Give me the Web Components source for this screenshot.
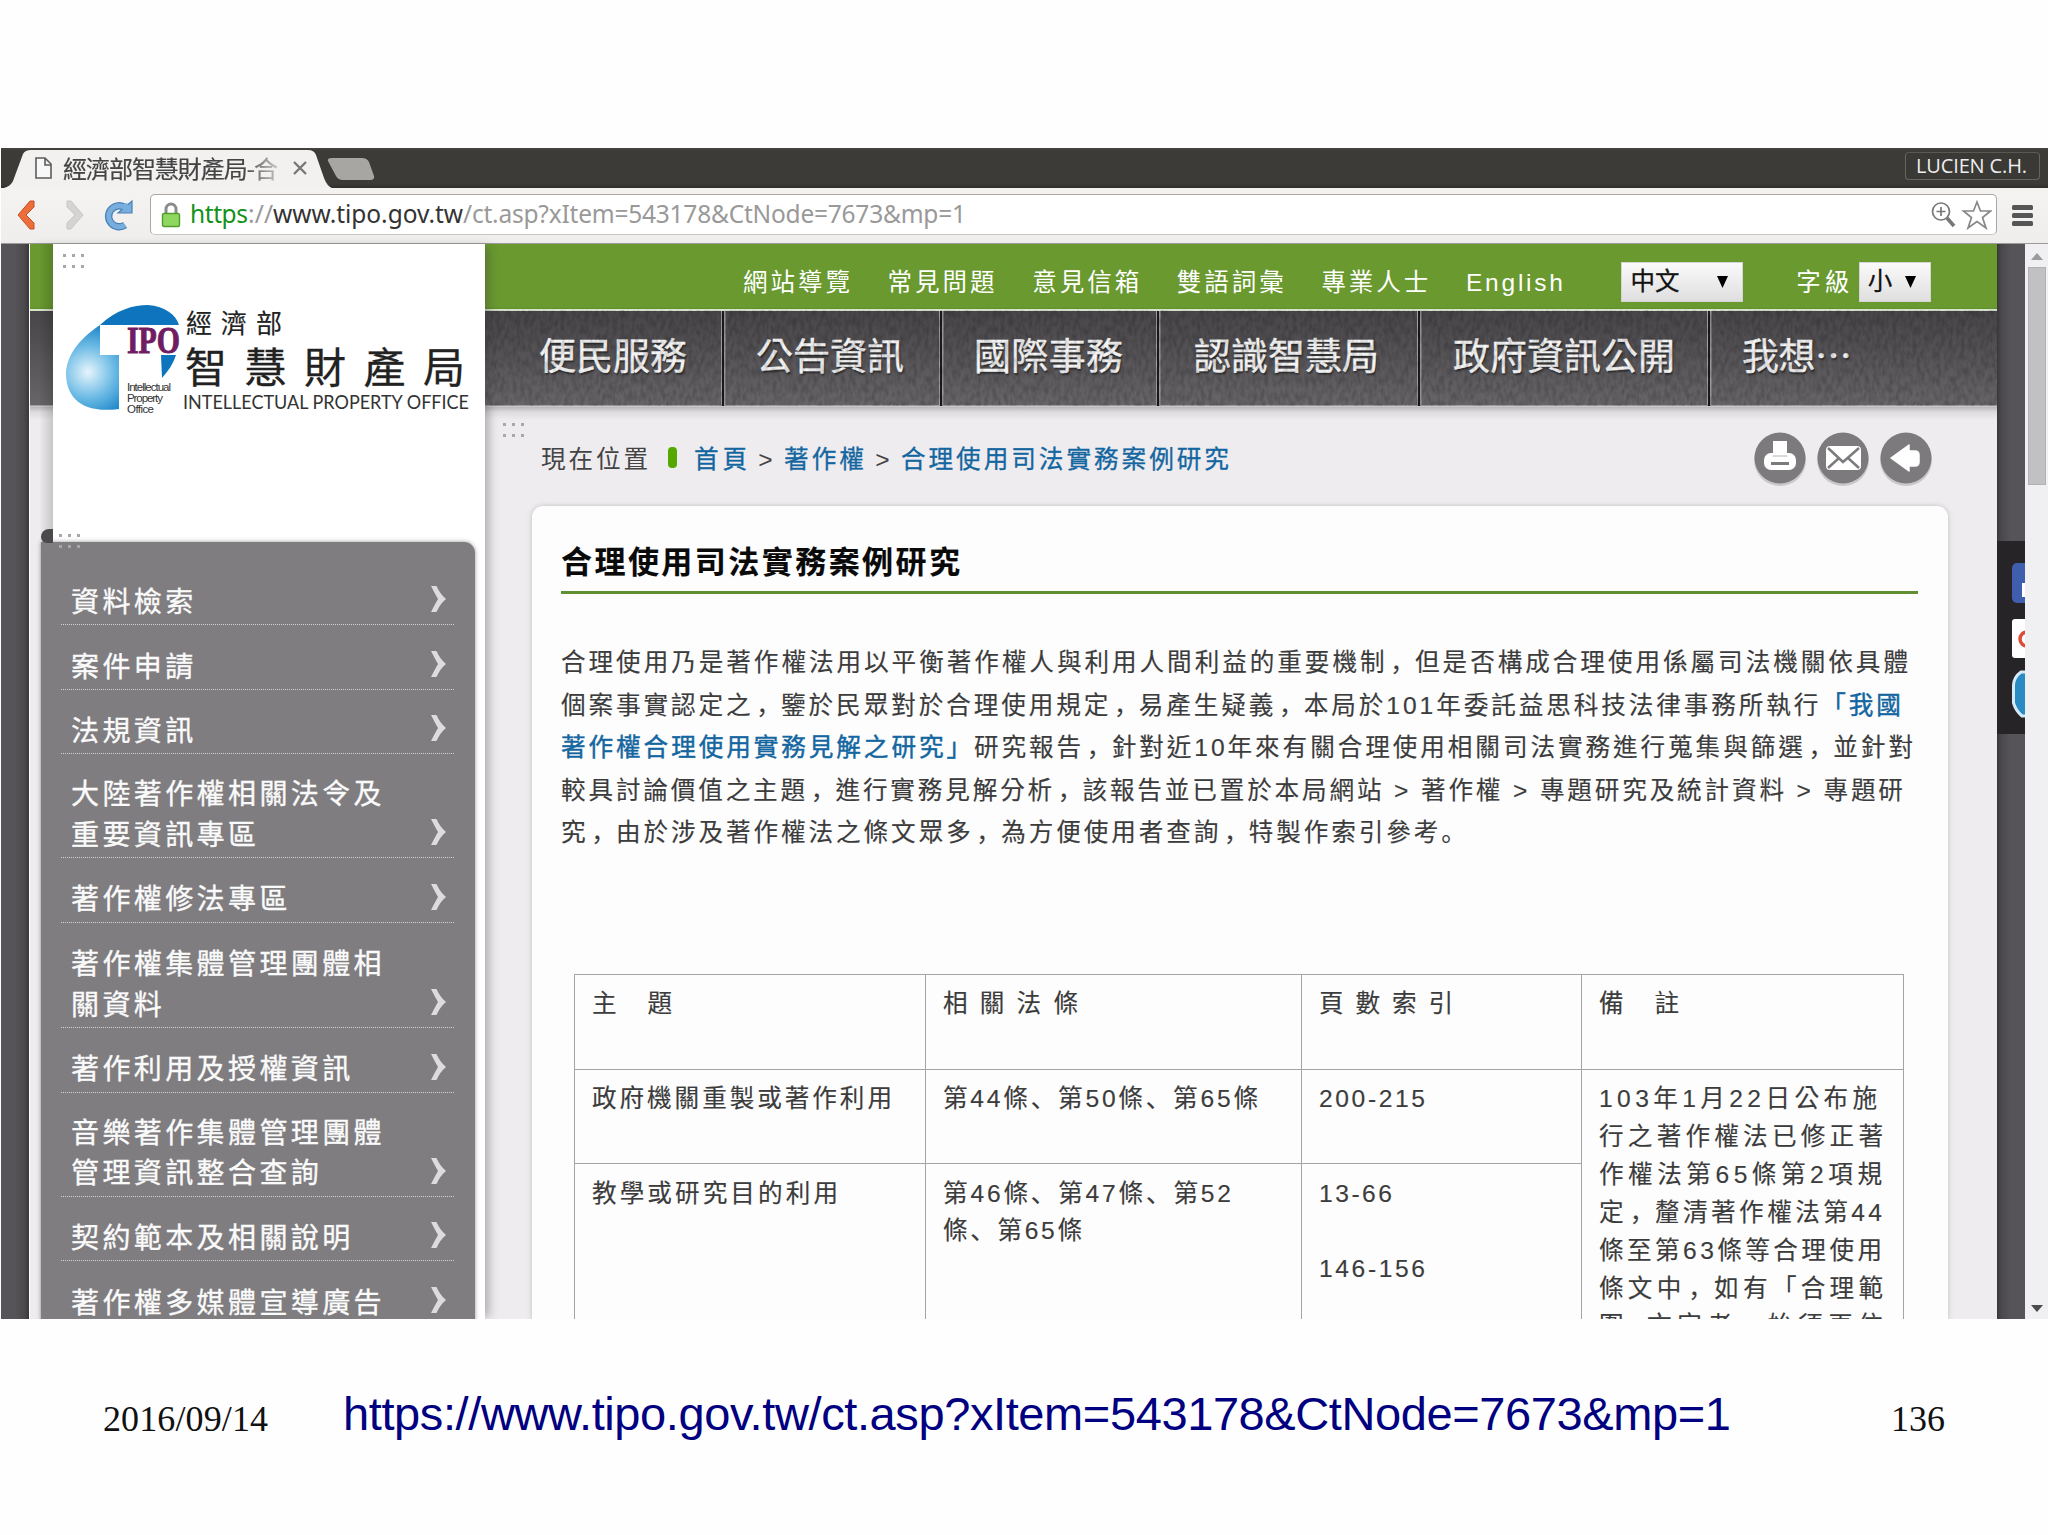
<!DOCTYPE html>
<html lang="zh-Hant">
<head>
<meta charset="utf-8">
<title>經濟部智慧財產局</title>
<style>
html,body{margin:0;background:#fefefe}
body{width:2048px;height:1535px;overflow:hidden;font-family:"Liberation Sans","Noto Sans CJK TC",sans-serif}
</style>
</head>
<body>
<slide-page></slide-page>
<script>
/* Ideographic commas and stops take the lower-left glyph forms; the full-width comma is nudged toward the centre of its cell. */
const punct=s=>s.replace(/[、。]/g,'<span class="j" lang="ja">$&</span>').replace(/，/g,'<span class="j c" lang="ja">，</span>');
const make=(name,html)=>customElements.define(name,class extends HTMLElement{
  constructor(){super();this.attachShadow({mode:'open'}).innerHTML=typeof html==='function'?'':html}
  connectedCallback(){if(typeof html==='function')this.shadowRoot.innerHTML=html(this)}
});
const base='*,:host{box-sizing:border-box}.j{font-family:"Noto Sans CJK JP";line-height:0}.c{padding-left:.11em;margin-right:-.11em}';

make('slide-page',`<style>${base}
:host{display:flex;flex-direction:column;width:2048px;height:1535px;padding:148px 0 0 1px}
browser-window{flex:none}
slide-footer{flex:1}
</style><browser-window></browser-window><slide-footer></slide-footer>`);

make('slide-footer',`<style>${base}
:host{display:flex;padding:72px 0 0 102px;align-items:flex-start}
.d{font:36px/40px "Liberation Serif",serif;margin-top:8px;color:#111}
.u{font-size:47px;line-height:54px;color:#000080;margin-left:75px;margin-top:-4px}
.n{margin-left:160px}
</style>
<fit-text class="d" w="165">2016/09/14</fit-text>
<fit-text class="u" w="1388">https://www.tipo.gov.tw/ct.asp?xItem=543178&amp;CtNode=7673&amp;mp=1</fit-text>
<fit-text class="d n" w="54">136</fit-text>`);

make('browser-window',`<style>${base}
:host{display:flex;flex-direction:column;width:2047px;height:1171px;overflow:hidden}
.view{display:flex;flex:1;min-height:0;background:#565458}
.l,.r{width:28px;flex:none}
.l{background:linear-gradient(90deg,#565458 50%,#4a484b 85%,#39373a)}
.r{background:linear-gradient(270deg,#565458 50%,#4a484b 85%,#39373a);display:flex;flex-direction:column;padding-top:297px}
site-page{width:1968px;flex:none}
</style>
<tab-strip></tab-strip><tool-bar></tool-bar>
<div class="view"><div class="l"></div><site-page></site-page><div class="r"><share-dock></share-dock></div><scroll-bar></scroll-bar></div>`);

make('tab-strip',`<style>${base}
:host{display:flex;height:39.5px;flex:none;background:linear-gradient(#45443f 0,#3c3b37 3px,#3c3b37 36px,#2f2e2b);justify-content:space-between}
.tabs{display:grid}
.tabs>*{grid-area:1/1}
.row{display:flex;align-items:center;padding-left:34px;height:40px}
.t{font-family:"Noto Sans CJK TC",sans-serif;font-size:24px;line-height:36px;color:#444;-webkit-text-stroke:.2px #444;margin-left:10px;-webkit-mask-image:linear-gradient(90deg,#000 84%,rgba(0,0,0,.25));mask-image:linear-gradient(90deg,#000 84%,rgba(0,0,0,.25))}
.x{margin-left:15px}
.who{width:135px;height:28px;margin:4px 8px 0 0;border:1px solid #66655f;border-top-color:#5a5954;border-radius:4px;color:#eee;font:20px/26px "Open Sans",sans-serif;padding-left:10px;background:#3a3935}
</style>
<div class="tabs">
<svg width="380" height="40" viewBox="0 0 380 40"><path d="M0 40H3Q10 38 12 33L22 6Q24 2 30 2H307Q313 2 315 7L323 30Q326 38 331 40Z" fill="#f2f1f0"/><path d="M331 10H361Q366 10 368 14L373 28Q374 32 369 32H342Q337 32 335 28L327 13Q326 10 331 10Z" fill="#a7a6a3"/></svg>
<div class="row"><svg width="18" height="22" viewBox="0 0 18 22"><path d="M1 1H10L16 7V21H1ZM10 1V8H16" fill="#f8f8f8" stroke="#5c5c5c" stroke-width="1.6"/></svg>
<fit-text class="t" w="215">經濟部智慧財產局-合</fit-text>
<svg class="x" width="14" height="14" viewBox="0 0 14 14"><path d="M1 1L13 13M13 1L1 13" stroke="#777" stroke-width="2.4"/></svg></div>
</div>
<div class="who"><fit-text w="111">LUCIEN C.H.</fit-text></div>`);

make('tool-bar',`<style>${base}
:host{display:flex;height:56.5px;flex:none;background:linear-gradient(#f4f3f2,#efeeed);border-bottom:1.5px solid #9c9a98;padding:6.5px 8px 8px 16px;align-items:stretch}
.nav{width:133px;flex:none}
.box{display:flex;align-items:center;width:1847px;border:1.5px solid #a9a6a3;border-bottom-color:#c9c7c4;border-radius:5px;background:#fff;padding:0 4px 0 10px}
.url{display:flex;font:24.5px/36px "Noto Sans",sans-serif;color:#999;margin-left:9px;flex:1;margin-top:-1px}
.g{color:#13911b}.b{color:#333}
.menu{margin:11px 0 0 15px}
</style>
<svg class="nav" width="133" height="42" viewBox="0 0 133 42">
<path d="M13 7L1 21L13 35H17V29L9 21L17 13V7Z" fill="#ec6f3b" stroke="#c44f22" stroke-width="1"/>
<path d="M54 7L66 21L54 35H50V29L58 21L50 13V7Z" fill="#d6d4d3" stroke="#c8c6c4" stroke-width="1"/>
<path d="M108 31A10.500 10.500 0 1 1 107 13" fill="none" stroke="#4781b5" stroke-width="7.400"/><path d="M101 19H115V7Z" fill="#78aede" stroke="#4781b5" stroke-width="1.200"/>
<path d="M108 31A10.500 10.500 0 1 1 107 13L111 11" fill="none" stroke="#78aede" stroke-width="5"/></svg>
<div class="box">
<svg width="20" height="26" viewBox="0 0 20 26"><path d="M5 12V7a5 5 0 0 1 10 0V12" fill="none" stroke="#8b8b8b" stroke-width="3"/><rect x="1.500" y="11.500" width="17" height="13" rx="1.500" fill="#8fd75f" stroke="#4f9f2c" stroke-width="1.400"/></svg>
<div class="url"><fit-text class="g" w="58">https</fit-text><fit-text w="25">://</fit-text><fit-text class="b" w="190">www.tipo.gov.tw</fit-text><fit-text w="503">/ct.asp?xItem=543178&amp;CtNode=7673&amp;mp=1</fit-text></div>
<svg width="62" height="30" viewBox="0 0 62 30" fill="none" stroke="#777" stroke-width="1.700"><circle cx="11" cy="11.500" r="8.500"/><path d="M11 7V16M6.500 11.500H15.500"/><path d="M17 18L24 26" stroke-width="3.600"/><path d="M47 2L50.500 11H60.500L52.500 17.500L56 28L47 21.500L38 28L41.500 17.500L33.500 11H43.500Z" stroke="#888"/></svg>
</div>
<svg class="menu" width="22" height="22" viewBox="0 0 22 22" fill="#555"><rect width="21" height="5" rx="1.500"/><rect y="8" width="21" height="5" rx="1.500"/><rect y="16" width="21" height="5" rx="1.500"/></svg>`);

make('scroll-bar',`<style>${base}
:host{display:flex;flex-direction:column;align-items:center;width:23px;background:#f0eff1;padding:9px 0 7px}
.th{width:18px;height:218px;background:#c1c0c2;border:1px solid #b2b1b3;margin-top:7px}
.sp{flex:1}
</style><svg width="12" height="7" viewBox="0 0 12 7"><path d="M6 0L12 7H0Z" fill="#9b9a9c"/></svg><div class="th"></div><div class="sp"></div><svg width="12" height="7" viewBox="0 0 12 7"><path d="M6 7L12 0H0Z" fill="#4c4c4c"/></svg>`);

make('share-dock',`<style>${base}
:host{display:flex;height:193px;background:#262427;padding:22px 0 0 15px;overflow:hidden}
</style><svg width="13" height="160" viewBox="0 0 13 160">
<rect x="0" y="0" width="40" height="40" rx="5" fill="#3f5fae"/><path d="M10 20H13V34H10Z" fill="#fff"/>
<rect x="0" y="56" width="40" height="39" rx="3" fill="#fff"/><circle cx="15" cy="76" r="7" fill="none" stroke="#dd4b39" stroke-width="3.500"/>
<path d="M13 109H9Q2 114 1.500 122V140Q4 148 10 153H13" fill="#2a8ac4" stroke="#d5eaf6" stroke-width="3"/></svg>`);

make('site-page',`<style>${base}
:host{display:flex;height:1076px;border-left:1px solid #fff;
background:linear-gradient(#69992f 0 63px,#5f8f2c 65px,#d9e4cf 65px 67px,transparent 67px),linear-gradient(transparent 67px,#484648 67px,#504e51 95px,#676568 161px,#d9d7da 162px,#b9b6ba 163px,#dddbde 168px,#eeecef 176px)}
side-column{width:455px;flex:none}
.main{flex:1;min-width:0;display:flex;flex-direction:column}
</style><side-column></side-column><div class="main"><top-links></top-links><main-nav></main-nav><crumb-bar></crumb-bar><article-card></article-card></div>`);

make('dot-mark',`<style>:host{display:block;width:24px;height:14px}svg{display:block}</style>
<svg width="24" height="14" viewBox="0 0 24 14" fill="#a9a7aa"><path d="M0 0h3v3h-3zM9 0h3v3h-3zM18 0h3v3h-3zM0 11h3v3h-3zM9 11h3v3h-3zM18 11h3v3h-3z"/></svg>`);

make('side-column',`<style>${base}
:host{display:flex;flex-direction:column;background:linear-gradient(90deg,transparent 0 9px,rgba(0,0,0,.16) 23px,#fff 23px);position:relative;box-shadow:7px 0 9px -3px rgba(60,55,60,.35);z-index:1}
.logo{height:298px;margin-left:23px;flex:none;padding:10px 0 0 10px;display:flex;flex-direction:column}
.logo svg{margin-top:33px;margin-left:2px}
.menu{width:434px;margin-left:11px;flex:1;background:#7f7d80;border-radius:0 11px 0 0;padding:27px 21px 0 20px;display:flex;flex-direction:column;box-shadow:0 0 4px rgba(80,80,80,.6)}
.fold{position:absolute;left:11px;top:285px;width:12px;height:14px;background:#4b494c;border-radius:8px 0 0 6px}
.dm{position:absolute;left:29px;top:290px}
</style>
<div class="logo"><dot-mark></dot-mark>
<svg width="420" height="120" viewBox="65 301 420 120">
<defs><radialGradient id="a" cx="88" cy="372" r="52" gradientUnits="userSpaceOnUse"><stop offset="0" stop-color="#e6f5fc"/><stop offset=".5" stop-color="#6dbbe5"/><stop offset="1" stop-color="#0d7cc3"/></radialGradient></defs>
<path d="M100 325V355H119V409C80 414 66 396 66 373C67 353 82 337 100 325Z" fill="url(#a)"/>
<path d="M100 325C116 310 133 305 148 305C165 306 176 315 179 325Z" fill="#0e74bd"/>
<path d="M161 355H176C173 364 169 370 162 378Z" fill="#0e74bd"/>
<text x="127" y="353" font-family="Liberation Serif" font-weight="bold" font-size="38" textLength="53" lengthAdjust="spacingAndGlyphs" fill="#701c62" stroke="#701c62">IPO</text>
<g font-family="Liberation Sans" font-size="11.500" fill="#333" lengthAdjust="spacingAndGlyphs"><text x="127" y="391" textLength="44">Intellectual</text><text x="127" y="402" textLength="36">Property</text><text x="127" y="413" textLength="27">Office</text></g>
<g font-family="Noto Sans CJK TC" fill="#222" stroke="#222"><text x="186" y="333" font-size="26" textLength="96" stroke-width=".2">經濟部</text><text x="185" y="382.500" font-size="42" textLength="280" stroke-width=".3">智慧財產局</text></g>
<text x="183" y="408.500" font-family="Lato" font-size="19.500" textLength="286" lengthAdjust="spacingAndGlyphs" fill="#333">INTELLECTUAL PROPERTY OFFICE</text></svg></div>
<div class="menu">
<side-item h="56">資料檢索</side-item><side-item h="65">案件申請</side-item><side-item h="64">法規資訊</side-item>
<side-item h="104">大陸著作權相關法令及<br>重要資訊專區</side-item><side-item h="64.500">著作權修法專區</side-item>
<side-item h="105.500">著作權集體管理團體相<br>關資料</side-item><side-item h="64.500">著作利用及授權資訊</side-item>
<side-item h="104">音樂著作集體管理團體<br>管理資訊整合查詢</side-item><side-item h="64.500">契約範本及相關說明</side-item><side-item h="65">著作權多媒體宣導廣告</side-item>
</div>
<div class="fold"></div><dot-mark class="dm"></dot-mark>`);

make('side-item',e=>`<style>${base}
:host{display:flex;flex:none;height:${e.getAttribute('h')}px;align-items:flex-end;justify-content:space-between;border-bottom:1.5px dotted #d3d1d4;padding:0 8px 4px 10px;color:#fafafa;-webkit-text-stroke:.35px #fafafa;font-family:"Noto Sans CJK TC",sans-serif;font-size:28px;letter-spacing:3.4px;line-height:40.500px;white-space:nowrap}
svg{margin-bottom:7px;flex:none}
</style><div><slot></slot></div><svg width="15" height="27" viewBox="0 0 15 27"><path d="M0 0H5.500Q9 8 15 13Q9 18 5.500 26H0Q4 18 7 13Q4 8 0 0Z" fill="#dddbde"/></svg>`);

make('top-links',`<style>${base}
:host{display:flex;height:66px;flex:none;padding:11px 0 0 258px;align-items:center;color:#fff;font-size:24.500px;line-height:34px;gap:37.6px}
.sel{display:flex;flex:none;align-items:center;justify-content:space-between;height:40px;margin-top:-1px;background:linear-gradient(#fafafa,#dfdfdf);border:1px solid #d4d4d4;color:#111;-webkit-text-stroke:.3px #111;padding:0 14px 0 9px}
.a{width:122px;margin-left:20px}.b{width:72px;padding-right:14px;padding-left:8px;margin-left:-28px}
.z{margin-left:16px}
</style>
<fit-text w="107">網站導覽</fit-text><fit-text w="107">常見問題</fit-text><fit-text w="107">意見信箱</fit-text><fit-text w="107">雙語詞彙</fit-text><fit-text w="107">專業人士</fit-text><fit-text w="97">English</fit-text>
<div class="sel a"><fit-text w="49">中文</fit-text><svg width="11" height="12" viewBox="0 0 11 12"><path d="M0 0H11L5.500 12Z"/></svg></div>
<fit-text class="z" w="53">字級</fit-text>
<div class="sel b"><span>小</span><svg width="11" height="12" viewBox="0 0 11 12"><path d="M0 0H11L5.500 12Z"/></svg></div>`);

make('main-nav',`<style>${base}
:host{display:grid;height:97px;flex:none;font-size:37px;line-height:94px;color:#f5f5f5;-webkit-text-stroke:.4px #f5f5f5;text-shadow:1px 2px 2px rgba(0,0,0,.55)}
:host>*{grid-area:1/1}
.n{width:100%;height:96px;opacity:.16}
.row{display:flex;padding-top:1px;height:96px}
.row div{border-right:2.5px solid #1c1a1c;box-shadow:inset -1px 0 #a09ea1,1.500px 0 #9a989b;height:95px;display:flex;flex:none}
.row div:last-child{border:0;box-shadow:none}
</style>
<svg class="n"><filter id="f"><feTurbulence type="fractalNoise" baseFrequency=".25 .12" numOctaves="2"/><feColorMatrix values="0 0 0 0 0 0 0 0 0 0 0 0 0 0 0 2.500 0 0 0 -.9"/></filter><rect width="100%" height="96" y="1" filter="url(#f)"/></svg>
<div class="row">
<div style="width:239px;padding-left:54px"><fit-text w="148">便民服務</fit-text></div>
<div style="width:218px;padding-left:32px"><fit-text w="148">公告資訊</fit-text></div>
<div style="width:217px;padding-left:32px"><fit-text w="149">國際事務</fit-text></div>
<div style="width:261px;padding-left:35px"><fit-text w="185">認識智慧局</fit-text></div>
<div style="width:290px;padding-left:33px"><fit-text w="222">政府資訊公開</fit-text></div>
<div style="padding-left:32px"><fit-text w="110">我想⋯</fit-text></div>
</div>`);

make('crumb-bar',`<style>${base}
:host{display:flex;height:99px;flex:none;align-items:flex-start;padding:16px 64px 0 18px;font-size:24.600px;line-height:36px;color:#444;justify-content:space-between}
.t{display:flex;margin-left:14px;padding-top:19px;align-items:center}
.p{width:9px;height:21px;border-radius:4px;background:#55a800;margin:-6px 17px 0 20px}
.t>*{flex:none}
.l{color:#1466a0;-webkit-text-stroke:.3px #1466a0}.s{margin:0 11.3px}
.ic{margin-top:8px}.w{display:flex}
</style>
<div class="w"><dot-mark></dot-mark>
<div class="t"><fit-text w="107">現在位置</fit-text><span class="p"></span><fit-text class="l" w="53">首頁</fit-text><span class="s">&gt;</span><fit-text class="l" w="80">著作權</fit-text><span class="s">&gt;</span><fit-text class="l" w="328">合理使用司法實務案例研究</fit-text></div></div>
<svg class="ic" width="180" height="56" viewBox="0 0 180 56">
<g fill="#c9c7ca"><circle cx="27" cy="29" r="26"/><circle cx="90" cy="29" r="26"/><circle cx="153" cy="29" r="26"/></g>
<g fill="#7c7a7d"><circle cx="27" cy="27" r="25.500"/><circle cx="90" cy="27" r="25.500"/><circle cx="153" cy="27" r="25.500"/></g>
<path d="M20 10H34V25H20Z" fill="#fff"/><rect x="11" y="22" width="32" height="17" rx="7" fill="#fff"/><path d="M19.500 25H34.500" stroke="#cfcdd0" stroke-width="1.500"/><path d="M18 32.500H36" stroke="#7c7a7d" stroke-width="3"/>
<rect x="73" y="15" width="35" height="24" rx="4" fill="#fff"/><path d="M75 17L90 31L106 17M75 37L86 27M106 37L95 27" fill="none" stroke="#7c7a7d" stroke-width="2.500"/>
<path d="M138 27L156 14V20H162Q166 20 166 24V31Q166 35 162 35H156V40Z" fill="#fff" stroke="#fff" stroke-width="1.500" stroke-linejoin="round"/></svg>`);

make('article-card',`<style>${base}
:host{display:flex;flex-direction:column;flex:1;min-height:0;margin:0 49px 0 47px;background:#fdfdfe;border-radius:11px 11px 0 0;box-shadow:0 0 5px rgba(110,105,110,.35);padding:30px 30px 0 29px;color:#3c3c3c;-webkit-text-stroke:.15px;font-size:24.600px}
h1{margin:0;font-size:31px;line-height:54px;font-weight:bold;color:#0a0a0a;height:58px;border-bottom:3px solid #609032;flex:none}
.p{display:flex;flex-direction:column;margin-top:48px;line-height:42.600px;height:331.500px;flex:none}
.k{color:#1466a0;-webkit-text-stroke:.45px #1466a0}
case-table{margin-left:13px}
</style>
<h1><fit-text w="399">合理使用司法實務案例研究</fit-text></h1>
<div class="p">`+punct(`
<fit-text w="1347">合理使用乃是著作權法用以平衡著作權人與利用人間利益的重要機制，但是否構成合理使用係屬司法機關依具體</fit-text>
<fit-text w="1340">個案事實認定之，鑒於民眾對於合理使用規定，易產生疑義，本局於101年委託益思科技法律事務所執行<span class="k">「我國</span></fit-text>
<fit-text w="1352"><span class="k">著作權合理使用實務見解之研究」</span>研究報告，針對近10年來有關合理使用相關司法實務進行蒐集與篩選，並針對</fit-text>
<fit-text w="1342">較具討論價值之主題，進行實務見解分析，該報告並已置於本局網站 &gt; 著作權 &gt; 專題研究及統計資料 &gt; 專題研</fit-text>
<fit-text w="905">究，由於涉及著作權法之條文眾多，為方便使用者查詢，特製作索引參考。</fit-text>
`)+`</div>
<case-table></case-table>`);

make('case-table',`<style>${base}
:host{display:grid;width:1330px;grid-template-columns:351px 376px 280px 322px;grid-template-rows:95px 94.500px 240px;border-left:1.500px solid #a5a3a6;border-top:1.500px solid #a5a3a6;line-height:37.900px;flex:none}
div{border-right:1.500px solid #a5a3a6;border-bottom:1.500px solid #a5a3a6;padding:10.500px 0 0 17px;display:flex;flex-direction:column}
.r{grid-column:4;grid-row:2/4}
.g{margin-top:38px}
</style>`+punct(`
<div><fit-text w="80">主　題</fit-text></div><div><fit-text w="135">相 關 法 條</fit-text></div><div><fit-text w="134">頁 數 索 引</fit-text></div><div><fit-text w="80">備　註</fit-text></div>
<div><fit-text w="300">政府機關重製或著作利用</fit-text></div><div><fit-text w="315">第44條、第50條、第65條</fit-text></div><div><fit-text w="106">200-215</fit-text></div>
<div class="r"><fit-text w="278">103年1月22日公布施</fit-text><fit-text w="284">行之著作權法已修正著</fit-text><fit-text w="283">作權法第65條第2項規</fit-text><fit-text w="283">定，釐清著作權法第44</fit-text><fit-text w="283">條至第63條等合理使用</fit-text><fit-text w="284">條文中，如有「合理範</fit-text><fit-text w="284">圍｣文定者，始須再依</fit-text></div>
<div><fit-text w="246">教學或研究目的利用</fit-text></div><div><fit-text w="288">第46條、第47條、第52</fit-text><fit-text w="139">條、第65條</fit-text></div><div><fit-text w="73">13-66</fit-text><fit-text class="g" w="106">146-156</fit-text></div>`));

/* Spaces its characters so that the line fills the width given in "w". */
customElements.define('fit-text',class extends HTMLElement{
  constructor(){super();this.attachShadow({mode:'open'}).innerHTML='<style>:host{display:block;flex:none;white-space:nowrap}</style><slot></slot>'}
  connectedCallback(){
    const w=+this.getAttribute('w'),n=[...this.textContent].length;
    const r=document.createRange();r.selectNodeContents(this);
    this.style.letterSpacing=((w-r.getBoundingClientRect().width)/(n-1))+'px';
    this.style.width=w+'px';
  }
});
</script>
</body>
</html>
